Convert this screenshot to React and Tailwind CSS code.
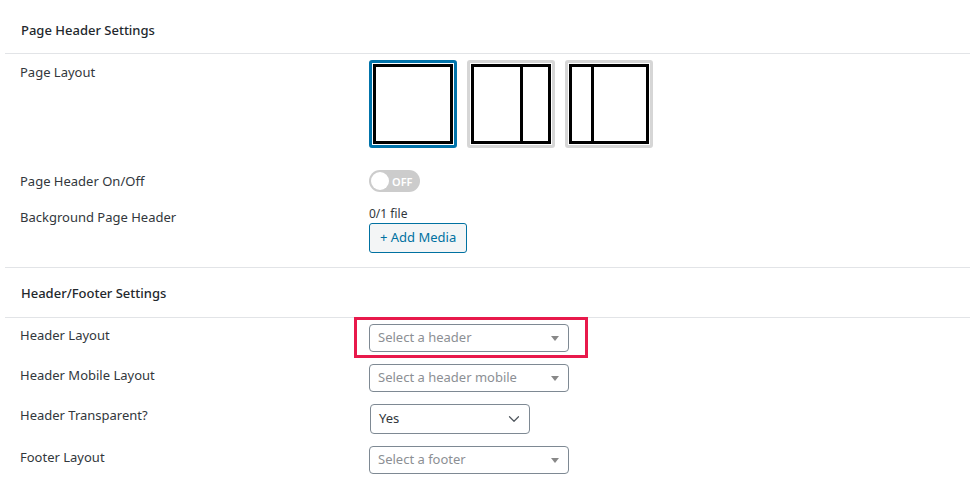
import { ChevronDown } from "lucide-react";

const font = { fontFamily: '"Noto Sans", "Open Sans", sans-serif' };

function Heading({ children, className = "" }) {
  return (
    <div className={`pl-[16px] border-b border-[#e2e4e7] text-[13px] font-medium text-[#23282d] leading-[18px] ${className}`}>
      {children}
    </div>
  );
}

function Row({ label, children, className = "", labelClass = "" }) {
  return (
    <div className={`flex ${className}`}>
      <div className={`w-[364px] shrink-0 pl-[15px] text-[13px] text-[#32373c] ${labelClass}`}>{label}</div>
      <div>{children}</div>
    </div>
  );
}

function LayoutBox({ active, split }) {
  return (
    <div
      className={`w-[88px] h-[88px] rounded-[3px] border-[3px] p-px ${active ? "border-[#0073aa]" : "border-[#d6d6d6]"}`}
    >
      <div className="w-full h-full border-[3px] border-black flex">
        {split === "right" && (
          <>
            <div className="w-[49px] border-r-[3px] border-black" />
            <div className="flex-1" />
          </>
        )}
        {split === "left" && (
          <>
            <div className="w-[22px] border-r-[3px] border-black" />
            <div className="flex-1" />
          </>
        )}
      </div>
    </div>
  );
}

function FakeSelect({ placeholder }) {
  return (
    <div className="w-[200px] h-[28px] rounded-[4px] border border-[#7e8993] flex items-center justify-between pl-[8px] pr-[9px] text-[13px] text-[#8c8f94] bg-white">
      <span>{placeholder}</span>
      <svg width="8" height="5" viewBox="0 0 8 5">
        <path d="M0 0 L8 0 L4 5 Z" fill="#888" />
      </svg>
    </div>
  );
}

export default function App() {
  return (
    <div className="w-[971px] h-[485px] bg-white overflow-hidden" style={font}>
      <div className="ml-[5px] mr-[1px]">
        <Heading className="h-[54px] pt-[21px]">Page Header Settings</Heading>

        <Row label="Page Layout" className="pt-[6px]" labelClass="pt-[3px]">
          <div className="flex gap-[10px]">
            <LayoutBox active />
            <LayoutBox split="right" />
            <LayoutBox split="left" />
          </div>
        </Row>

        <Row label="Page Header On/Off" className="mt-[22px]" labelClass="pt-[2px]">
          <div className="relative w-[51px] h-[22px] rounded-full bg-[#cccccc] flex items-center">
            <div className="absolute left-[2px] top-[2px] w-[18px] h-[18px] rounded-full bg-white" />
            <span className="ml-[23px] text-[11px] font-semibold text-white leading-none">OFF</span>
          </div>
        </Row>

        <Row label="Background Page Header" className="mt-[14px]" labelClass="pt-[2px]">
          <div className="text-[12px] text-[#32373c] leading-[16px]">0/1 file</div>
          <button className="mt-px h-[30px] px-[10px] rounded-[3px] border border-[#0071a1] bg-[#f3f5f6] text-[13px] text-[#0071a1]">
            + Add Media
          </button>
        </Row>

        <div className="mt-[14px] border-t border-[#e2e4e7]" />
        <Heading className="h-[50px] pt-[16px]">Header/Footer Settings</Heading>

        <Row label="Header Layout" className="pt-[6px]" labelClass="pt-[2px]">
          <div className="relative">
            <div className="pointer-events-none absolute left-[-15px] top-[-7px] w-[234px] h-[41px] border-[3px] border-[#e8194b]" />
            <FakeSelect placeholder="Select a header" />
          </div>
        </Row>

        <Row label="Header Mobile Layout" className="mt-[12px]" labelClass="pt-[2px]">
          <FakeSelect placeholder="Select a header mobile" />
        </Row>

        <Row label="Header Transparent?" className="mt-[12px]" labelClass="pt-[2px]">
          <div className="ml-px w-[160px] h-[30px] rounded-[4px] border border-[#7e8993] flex items-center justify-between pl-[8px] pr-[6px] text-[13px] text-[#32373c]">
            <span>Yes</span>
            <ChevronDown size={18} strokeWidth={1.6} color="#50575e" />
          </div>
        </Row>

        <Row label="Footer Layout" className="mt-[12px]" labelClass="pt-[2px]">
          <FakeSelect placeholder="Select a footer" />
        </Row>
      </div>
    </div>
  );
}
